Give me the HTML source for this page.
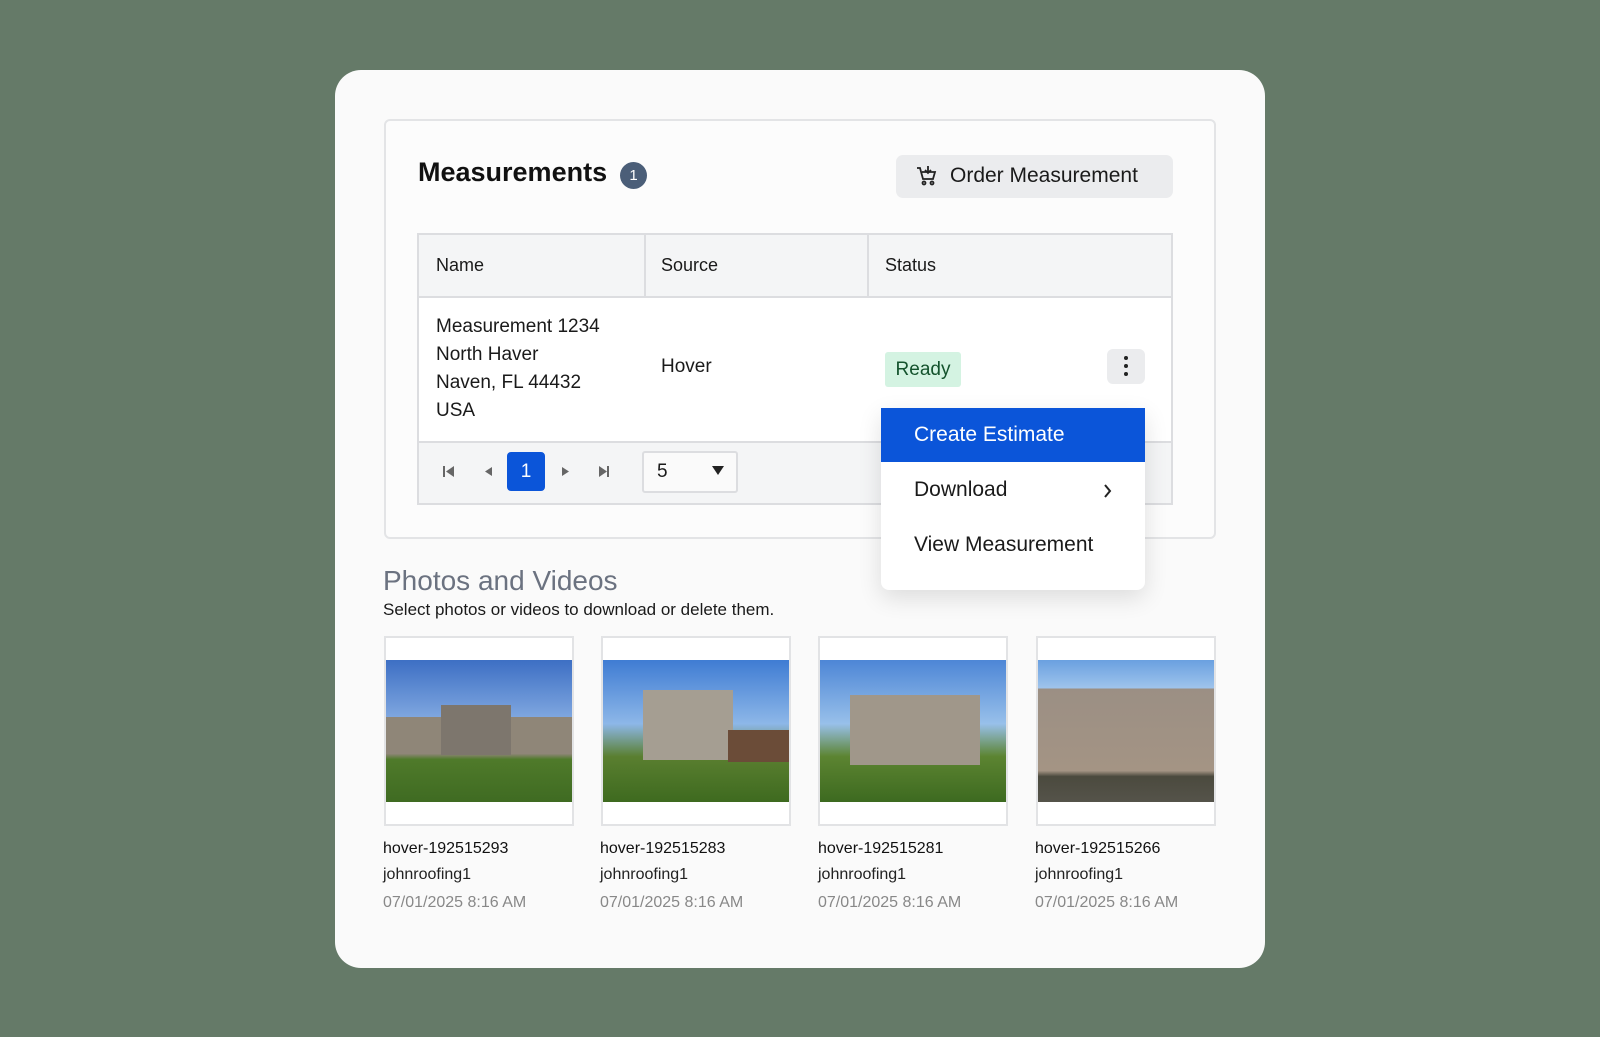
<!DOCTYPE html>
<html><head><meta charset="utf-8"><style>
*{box-sizing:border-box;margin:0;padding:0}
body{width:1600px;height:1037px;background:#657a68;font-family:"Liberation Sans",sans-serif;position:relative;overflow:hidden;color:#1a1a1a}
.a{position:absolute}
.card{left:335px;top:70px;width:930px;height:898px;background:#fafafa;border-radius:26px}
.panel{left:384px;top:119px;width:832px;height:420px;border:2px solid #e3e4e6;border-radius:6px;background:#fcfcfc}
.t{white-space:nowrap}
.tbl{left:417px;top:233px;width:756px;height:272px;border:2px solid #dcdde0;background:#fff}
.hd{left:0;top:0;width:752px;height:63px;background:#f4f5f6;border-bottom:2px solid #dcdde0}
.vl{top:0;width:2px;height:63px;background:#dcdde0}
.ft{left:0;top:206px;width:752px;height:62px;background:#f4f5f6;border-top:2px solid #dcdde0}
.row{font-size:19px;line-height:28px}
.ph{width:190px;height:190px;border:2px solid #e2e3e5;background:#fff}
.img{left:0;top:22px;width:186px;height:142px;overflow:hidden}
.cap1{font-size:16px;color:#111}
.cap2{font-size:16px;color:#222}
.cap3{font-size:16px;color:#888}
</style></head><body>
<div class="a card"></div>
<div class="a panel"></div>
<div class="a t" style="left:418px;top:157px;font-size:27px;font-weight:bold;color:#111">Measurements</div>
<div class="a" style="left:620px;top:162px;width:27px;height:27px;border-radius:50%;background:#4b5e78;color:#fff;font-size:15px;text-align:center;line-height:27px">1</div>
<div class="a" style="left:896px;top:155px;width:277px;height:43px;background:#ebecee;border-radius:7px"></div>
<svg class="a" style="left:916px;top:165px" width="22" height="22" viewBox="0 0 22 22" fill="none" stroke="#222" stroke-width="1.8"><path d="M1 3h3l3 11h10l2-7H6"/><circle cx="8" cy="18" r="1.5"/><circle cx="16" cy="18" r="1.5"/><path d="M12 1v7M9 5l3 3 3-3"/></svg>
<div class="a t" style="left:950px;top:164px;font-size:21px;color:#1a1a1a">Order Measurement</div>

<div class="a tbl">
 <div class="a hd"></div>
 <div class="a vl" style="left:225px"></div>
 <div class="a vl" style="left:448px"></div>
 <div class="a t" style="left:17px;top:20px;font-size:18px">Name</div>
 <div class="a t" style="left:242px;top:20px;font-size:18px">Source</div>
 <div class="a t" style="left:466px;top:20px;font-size:18px">Status</div>
 <div class="a row" style="left:17px;top:78px">Measurement 1234<br>North Haver<br>Naven, FL 44432<br>USA</div>
 <div class="a t" style="left:242px;top:121px;font-size:19px">Hover</div>
 <div class="a" style="left:466px;top:117px;width:76px;height:35px;background:#d4f3e2;border-radius:3px;color:#14532d;font-size:19px;text-align:center;line-height:35px">Ready</div>
 <div class="a" style="left:688px;top:114px;width:38px;height:35px;background:#ebecee;border-radius:6px"></div>
 <div class="a" style="left:705px;top:121px;width:4px;height:4px;background:#222;border-radius:50%;box-shadow:0 8px 0 #222,0 16px 0 #222"></div>
 <div class="a ft"></div>
 <svg class="a" style="left:20px;top:222px" width="200" height="30" viewBox="0 0 200 30" fill="#666"><rect x="4" y="9" width="2" height="11"/><path d="M15 9v11l-8-5.5z"/><path d="M53 10v9l-7-4.5z"/><path d="M123 10v9l7-4.5z"/><path d="M160 9v11l8-5.5z"/><rect x="168" y="9" width="2" height="11"/></svg>
 <div class="a" style="left:88px;top:217px;width:38px;height:39px;background:#0b55d9;border-radius:4px;color:#fff;font-size:19px;text-align:center;line-height:39px">1</div>
 <div class="a" style="left:223px;top:216px;width:96px;height:42px;border:2px solid #dcdde0;background:#fafafa;border-radius:3px"></div>
 <div class="a t" style="left:238px;top:226px;font-size:19px">5</div>
 <svg class="a" style="left:293px;top:231px" width="12" height="10"><path d="M0 0h12L6 9z" fill="#222"/></svg>
</div>

<div class="a" style="left:881px;top:408px;width:264px;height:182px;background:#fff;border-radius:0 0 8px 8px;box-shadow:0 8px 24px rgba(0,0,0,.12)"></div>
<div class="a" style="left:881px;top:408px;width:264px;height:54px;background:#0b55d9"></div>
<div class="a t" style="left:914px;top:423px;font-size:21px;color:#fff">Create Estimate</div>
<div class="a t" style="left:914px;top:478px;font-size:21px">Download</div>
<svg class="a" style="left:1103px;top:483px" width="10" height="16"><path d="M2 2l5 6-5 6" stroke="#222" stroke-width="2" fill="none"/></svg>
<div class="a t" style="left:914px;top:533px;font-size:21px">View Measurement</div>

<div class="a t" style="left:383px;top:565px;font-size:28px;color:#6b7280">Photos and Videos</div>
<div class="a t" style="left:383px;top:600px;font-size:17px;color:#1a1a1a">Select photos or videos to download or delete them.</div>

<div class="a ph" style="left:384px;top:636px"><div class="a img" style="background:linear-gradient(#3d6fc4 0%,#7ea6df 40%,#8f8678 40%,#8f8678 66%,#4f7a2a 70%,#3f6b22 100%)"><div class="a" style="left:55px;top:45px;width:70px;height:50px;background:#7d766d"></div></div></div>
<div class="a ph" style="left:601px;top:636px"><div class="a img" style="background:linear-gradient(#3f7cd3 0%,#8db7e8 45%,#5a7f30 68%,#3e6a1f 100%)"><div class="a" style="left:40px;top:30px;width:90px;height:70px;background:#a59e92"></div><div class="a" style="left:125px;top:70px;width:61px;height:32px;background:#6b4c38"></div></div></div>
<div class="a ph" style="left:818px;top:636px"><div class="a img" style="background:linear-gradient(#4d86d6 0%,#98c0ea 45%,#5c8431 68%,#3d6a20 100%)"><div class="a" style="left:30px;top:35px;width:130px;height:70px;background:#a0978a"></div></div></div>
<div class="a ph" style="left:1036px;top:636px;width:180px"><div class="a img" style="width:176px;background:linear-gradient(#6aa0e0 0%,#9fc4ec 20%,#9b8f84 20%,#a49484 78%,#4b4a3e 82%,#55534a 100%)"></div></div>

<div class="a cap1 t" style="left:383px;top:840px">hover-192515293</div>
<div class="a cap2 t" style="left:383px;top:866px">johnroofing1</div>
<div class="a cap3 t" style="left:383px;top:894px">07/01/2025 8:16 AM</div>
<div class="a cap1 t" style="left:600px;top:840px">hover-192515283</div>
<div class="a cap2 t" style="left:600px;top:866px">johnroofing1</div>
<div class="a cap3 t" style="left:600px;top:894px">07/01/2025 8:16 AM</div>
<div class="a cap1 t" style="left:818px;top:840px">hover-192515281</div>
<div class="a cap2 t" style="left:818px;top:866px">johnroofing1</div>
<div class="a cap3 t" style="left:818px;top:894px">07/01/2025 8:16 AM</div>
<div class="a cap1 t" style="left:1035px;top:840px">hover-192515266</div>
<div class="a cap2 t" style="left:1035px;top:866px">johnroofing1</div>
<div class="a cap3 t" style="left:1035px;top:894px">07/01/2025 8:16 AM</div>
</body></html>
